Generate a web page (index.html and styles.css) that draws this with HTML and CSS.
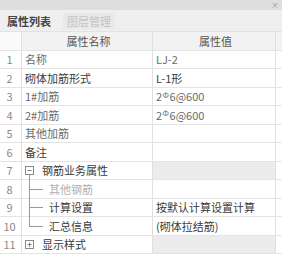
FILE: index.html
```html
<!DOCTYPE html>
<html>
<head>
<meta charset="utf-8">
<link rel="stylesheet" href="styles.css">
</head>
<body>
<div class="panel">
  <div class="titlebar"><span class="close">×</span></div>
  <div class="tabs">
    <div class="tab active">属性列表</div>
    <div class="tab inactive">图层管理</div>
  </div>
  <div class="grid">
    <div class="row head">
      <div class="num blank"></div>
      <div class="name center">属性名称</div>
      <div class="val center">属性值</div>
      <div class="extra"></div>
    </div>
    <div class="row">
      <div class="num">1</div>
      <div class="name muted">名称</div>
      <div class="val muted">LJ-2</div>
      <div class="extra"></div>
    </div>
    <div class="row">
      <div class="num">2</div>
      <div class="name">砌体加筋形式</div>
      <div class="val">L-1形</div>
      <div class="extra"></div>
    </div>
    <div class="row">
      <div class="num">3</div>
      <div class="name muted">1#加筋</div>
      <div class="val muted">2<span class="bar">Φ</span>6@600</div>
      <div class="extra"></div>
    </div>
    <div class="row">
      <div class="num">4</div>
      <div class="name muted">2#加筋</div>
      <div class="val muted">2<span class="bar">Φ</span>6@600</div>
      <div class="extra"></div>
    </div>
    <div class="row">
      <div class="num">5</div>
      <div class="name muted">其他加筋</div>
      <div class="val"></div>
      <div class="extra"></div>
    </div>
    <div class="row">
      <div class="num">6</div>
      <div class="name">备注</div>
      <div class="val"></div>
      <div class="extra"></div>
    </div>
    <div class="row">
      <div class="num">7</div>
      <div class="name tree-root"><span class="toggle">−</span>钢筋业务属性</div>
      <div class="val gray"></div>
      <div class="extra"></div>
    </div>
    <div class="row">
      <div class="num">8</div>
      <div class="name child disabled">其他钢筋</div>
      <div class="val"></div>
      <div class="extra"></div>
    </div>
    <div class="row">
      <div class="num">9</div>
      <div class="name child">计算设置</div>
      <div class="val">按默认计算设置计算</div>
      <div class="extra"></div>
    </div>
    <div class="row">
      <div class="num">10</div>
      <div class="name child last">汇总信息</div>
      <div class="val">(砌体拉结筋)</div>
      <div class="extra"></div>
    </div>
    <div class="row">
      <div class="num">11</div>
      <div class="name"><span class="toggle">+</span>显示样式</div>
      <div class="val gray"></div>
      <div class="extra"></div>
    </div>
  </div>
</div>
</body>
</html>
```
FILE: styles.css
```css
html, body {
  margin: 0;
  padding: 0;
  background: #ffffff;
}
body {
  font-family: "Noto Sans CJK SC", "Noto Sans", sans-serif;
  font-size: 11px;
  color: #3a3a3a;
}
.panel {
  width: 282px;
  height: 258px;
  display: flex;
  flex-direction: column;
  overflow: hidden;
}
.titlebar {
  height: 10px;
  background: #dedede;
  display: flex;
  justify-content: flex-end;
  align-items: center;
  padding-right: 3px;
}
.close {
  font-size: 8px;
  line-height: 8px;
  color: #999;
}
.tabs {
  height: 21px;
  background: #efefef;
  display: flex;
  align-items: center;
  padding-left: 3px;
  gap: 8px;
  border-bottom: 1px solid #e2e2e2;
}
.tab {
  height: 16px;
  line-height: 16px;
  padding: 0 4px;
  font-size: 11px;
}
.tab.active {
  color: #444;
  font-weight: 600;
}
.tab.inactive {
  color: #c4c4c4;
  background: #e9e9e9;
}
.grid {
  display: flex;
  flex-direction: column;
}
.row {
  display: grid;
  grid-template-columns: 22px 131px 123px 1fr;
  height: 18.5px;
  box-sizing: border-box;
  border-bottom: 1px solid #e4e4e4;
}
.row > div {
  display: flex;
  align-items: center;
  white-space: nowrap;
  box-sizing: border-box;
  border-right: 1px solid #e0e0e0;
  position: relative;
}
.row > .extra {
  border-right: none;
}
.head {
  background: #f2f2f2;
}
.head .blank {
  background: #fafafa;
}
.head .center {
  justify-content: center;
  color: #555;
}
.num {
  justify-content: center;
  color: #8a8a8a;
  padding-right: 2px;
}
.name {
  padding-left: 3px;
}
.val {
  padding-left: 3px;
}
.muted {
  color: #6a6a6a;
}
.disabled {
  color: #b0b0b0;
}
.gray {
  background: #ececec;
}
.bar {
  font-size: 8px;
  position: relative;
  top: -2px;
  margin: 0 0.5px;
}
.toggle {
  width: 7px;
  height: 7px;
  border: 1px solid #8a8a8a;
  display: inline-flex;
  align-items: center;
  justify-content: center;
  font-size: 9px;
  line-height: 7px;
  margin-left: 0;
  margin-right: 8px;
  color: #444;
  background: #fff;
}
.tree-root::after {
  content: "";
  position: absolute;
  left: 7px;
  top: 13px;
  bottom: -1px;
  border-left: 1px solid #9a9a9a;
}
.child {
  padding-left: 27px;
}
.child::before {
  content: "";
  position: absolute;
  left: 7px;
  top: 0;
  bottom: -1px;
  border-left: 1px solid #9a9a9a;
}
.child.last::before {
  bottom: 50%;
}
.child::after {
  content: "";
  position: absolute;
  left: 7px;
  width: 14px;
  top: 50%;
  border-top: 1px solid #9a9a9a;
}
```
